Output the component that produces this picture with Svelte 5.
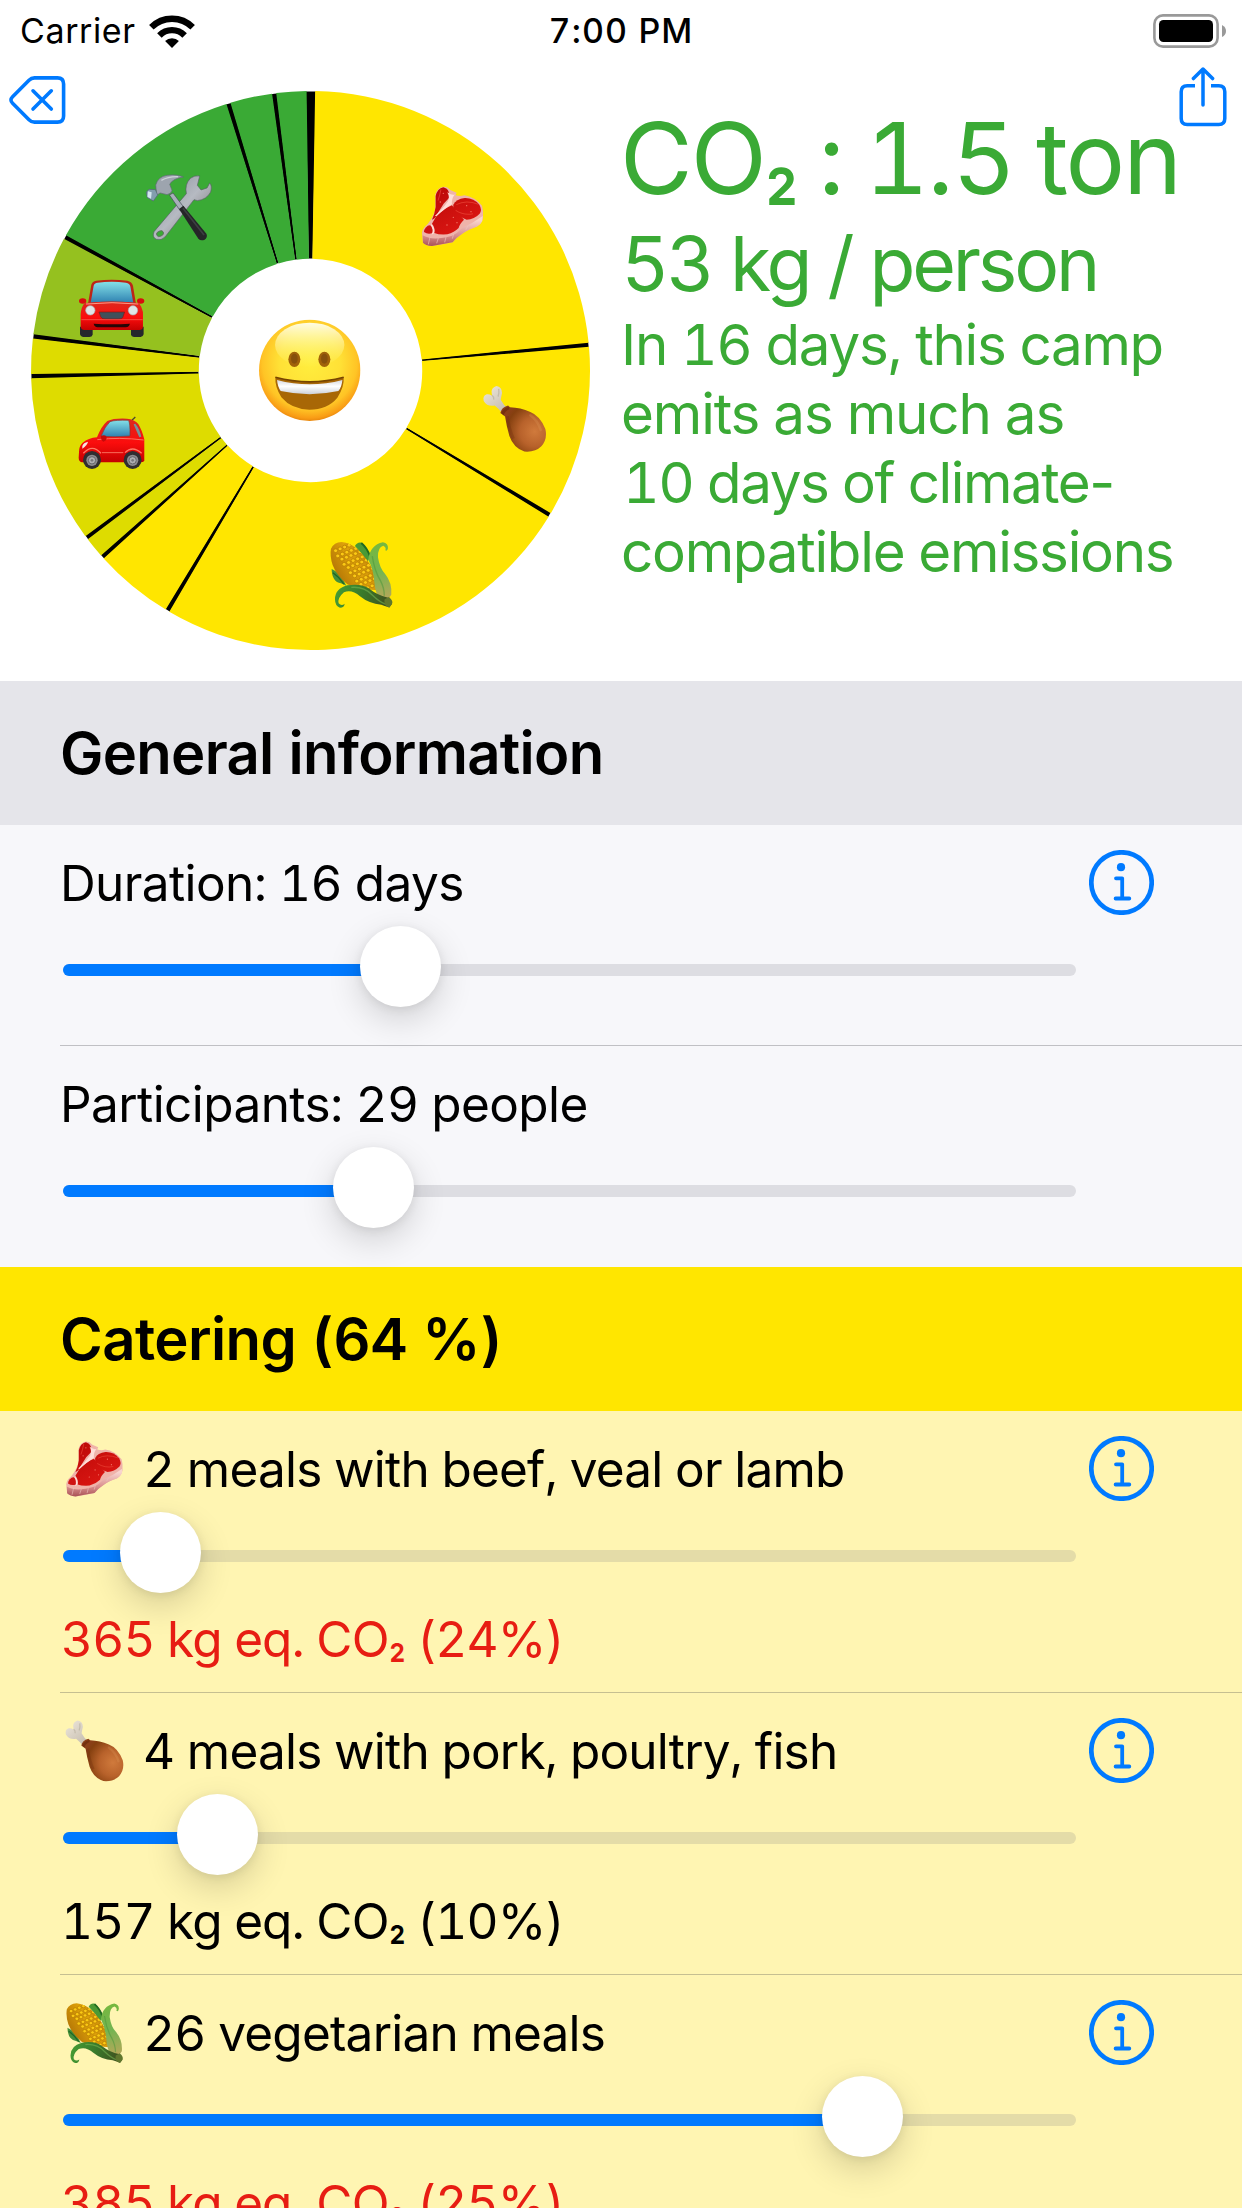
<script>
  const CX = 310.5;
  const CY = 370.5;
  const OUTER = 279.5;
  const INNER = 111.7;

  const YELLOW = '#ffe600';
  const LIME = '#dedc00';
  const OLIVE = '#95c11f';
  const GREEN = '#3aaa35';

  // Sector limits in degrees, clockwise from twelve o'clock.
  const sectors = [
    { from: 0.95, to: 84.3, color: YELLOW },
    { from: 85.15, to: 120.7, color: YELLOW },
    { from: 121.55, to: 210.35, color: YELLOW },
    { from: 211.2, to: 227.75, color: YELLOW },
    { from: 228.55, to: 232.85, color: LIME },
    { from: 233.65, to: 268.4, color: LIME },
    { from: 269.3, to: 276.6, color: LIME },
    { from: 277.45, to: 298.1, color: OLIVE },
    { from: 298.95, to: 342.5, color: GREEN },
    { from: 343.35, to: 352.1, color: GREEN },
    { from: 352.95, to: 359.2, color: GREEN },
  ];

  function point(radius, angle) {
    const rad = (angle * Math.PI) / 180;
    return `${(CX + radius * Math.sin(rad)).toFixed(2)} ${(CY - radius * Math.cos(rad)).toFixed(2)}`;
  }

  function ring(from, to, outer = OUTER, inner = INNER) {
    const large = to - from > 180 ? 1 : 0;
    return `M${point(outer, from)}A${outer} ${outer} 0 ${large} 1 ${point(outer, to)}L${point(inner, to)}A${inner} ${inner} 0 ${large} 0 ${point(inner, from)}Z`;
  }

  // Black wedges lie in the gaps between neighbouring sectors.
  const gaps = sectors.map((s, i) => {
    const next = sectors[(i + 1) % sectors.length];
    const end = i === sectors.length - 1 ? next.from + 360 : next.from;
    return ring(s.to - 0.15, end + 0.15, OUTER - 0.4, INNER + 0.4);
  });

  const general = [
    { label: 'Duration: 16 days', cls: 'duration', left: 297, info: true },
    { label: 'Participants: 29 people', cls: 'participants', left: 270, info: false },
  ];

  const meals = [
    { icon: 'steak', label: '2 meals with beef, veal or lamb', left: 57, kg: 365, share: 24, high: true },
    { icon: 'drumstick', label: '4 meals with pork, poultry, fish', left: 114, kg: 157, share: 10, high: false },
    { icon: 'corn', label: '26 vegetarian meals', left: 759, kg: 385, share: 25, high: true },
  ];

  const kernels = [];
  for (let r = 0; r < 10; r++) {
    for (let c = 0; c < 5; c++) {
      kernels.push({ x: 47 + c * 13.5 + r * 9.5 - (r % 2) * 3, y: 1112 - c * 5.5 + r * 12.6 + (r % 2) * 3 });
    }
  }
</script>

{#snippet steak()}
  <path d="M306 158 Q306 150 314 141 Q334 124 345 92 Q347 76 346 44 Q353 22 371 20 Q383 20 391 30 L410 38 L407 46 Q420 50 433 46 Q463 50 486 77 Q491 92 489 114 Q485 130 472 139 Q446 148 430 158 Q409 172 398 187 Q366 194 336 198 Q318 197 309 188 Z" fill="#efb3aa" />
  <path d="M308 166 Q338 184 396 167 Q412 160 427 143 Q459 130 488 108 L487 123 Q482 135 470 140 Q444 148 429 160 Q410 172 398 187 Q363 193 336 198 Q316 196 309 188 Z" fill="url(#steak-side)" />
  <path d="M330 171 L325 193 M355 174 L350 190 M378 171 L374 187 M401 162 L397 176 M444 138 L437 149" stroke="#edc1bd" stroke-width="3" fill="none" opacity=".65" />
  <path d="M347 81 L347 48 Q352 26 370 22 Q382 25 386 35 L389 52 L371 71 L354 98 Q346 117 336 119 Q344 102 347 81Z" fill="url(#steak-red)" />
  <path d="M349 109 Q374 84 396 76 Q411 95 432 119 Q418 133 416 144 Q403 157 382 163 Q358 165 343 159 Q346 143 336 131Z" fill="url(#steak-red)" />
  <path d="M400 74 Q408 57 434 54 Q461 53 478 74 Q487 89 479 101 Q463 118 440 119 Q414 110 400 91Z" fill="url(#steak-red)" />
  <path d="M317 143 Q326 133 334 137 Q343 148 338 159 Q324 165 312 156Q312 149 317 143Z" fill="#cf1413" />
  <path d="M409 74 Q437 59 475 73 M407 91 Q432 107 459 101 M363 28 Q359 48 354 62" stroke="#ed4a3a" stroke-width="3" fill="none" opacity=".65" />
  <path d="M345 107 Q365 91 384 64 Q390 51 382 37 Q398 48 405 43 Q394 56 396 73 Q375 85 349 109Z M335 133 Q346 145 342 160 L335 164 Q342 149 332 136Z" fill="#ffded8" />
  <g fill="#ff9c88" opacity=".75">
    <circle cx="361" cy="66" r="2" /><circle cx="370" cy="40" r="2" /><circle cx="400" cy="112" r="2" />
    <circle cx="381" cy="135" r="2" /><circle cx="440" cy="77" r="2" /><circle cx="453" cy="95" r="2" /><circle cx="411" cy="128" r="2" />
  </g>
{/snippet}

{#snippet drumstick()}
  <path d="M515 640 Q512 624 529 618 Q546 621 546 639 Q543 653 542 659 Q550 675 566 688 L550 704 Q536 686 524 677 Q501 681 491 663 Q487 648 500 643 Q508 642 516 647Z" fill="url(#bone)" />
  <path d="M516 646 Q522 650 521 659 M536 627 Q538 641 534 650" stroke="#b9b0a0" stroke-width="4" fill="none" opacity=".7" />
  <path d="M541 699 Q544 683 564 677 L570 682 Q601 683 631 696 Q660 707 676 747 Q683 778 664 799 Q645 818 613 815 Q580 803 568 768 Q559 737 555 710Z" fill="url(#chicken)" />
  <path d="M544 699 Q549 685 566 681 L568 688 Q554 694 551 706Z" fill="#74300f" />
  <path d="M562 709 Q566 746 580 776" stroke="#6b2b10" stroke-width="9" fill="none" opacity=".28" />
  <path d="M631 706 Q654 723 662 750" stroke="#efb06e" stroke-width="8" fill="none" opacity=".18" stroke-linecap="round" />
{/snippet}

{#snippet corn()}
  <path d="M35 1167 Q61 1177 79 1217 L63 1210 Q36 1206 35 1167Z" fill="#458f39" />
  <path d="M39 1178 Q58 1191 72 1212" stroke="#1f6527" stroke-width="4" fill="none" />
  <path d="M105 1098 Q112 1084 126 1088 Q144 1104 151 1133 L141 1145 Q127 1119 105 1098Z" fill="#4b9a35" />
  <path d="M124 1089 Q142 1104 151 1131" stroke="#216a22" stroke-width="6" fill="none" />
  <path d="M33 1106 Q42 1087 65 1086 Q91 1089 111 1106 Q140 1133 154 1162 Q174 1190 182 1222 L173 1231 Q109 1228 82 1213 Q50 1187 38 1155 Q29 1127 33 1106Z" fill="url(#cob)" />
  <g clip-path="url(#cob-clip)">
    {#each kernels as k}
      <ellipse cx={k.x} cy={k.y} rx="6.2" ry="5.6" fill="#fbc914" stroke="#b57c05" stroke-width="2.2" />
    {/each}
  </g>
  <path d="M145 1139 Q150 1095 189 1087 Q205 1090 204 1105 Q202 1115 196 1111 Q200 1102 190 1097 Q173 1101 174 1132 Q179 1165 195 1181 Q217 1208 214 1244 Q201 1266 181 1258 Q165 1239 163 1205 Q160 1166 145 1139Z" fill="url(#leaf)" />
  <path d="M157 1128 Q163 1171 181 1201 Q193 1223 193 1247" stroke="#4c963d" stroke-width="4" fill="none" opacity=".55" />
  <path d="M82 1216 Q122 1209 146 1225 Q173 1247 207 1254 L216 1272 L208 1282 Q192 1277 184 1274 Q147 1271 120 1249 Q95 1227 72 1237 Q52 1254 56 1270 Q65 1279 74 1271 Q73 1283 60 1283 Q45 1278 45 1258 Q45 1226 82 1216Z" fill="url(#leaf-low)" />
  <path d="M94 1222 Q132 1219 156 1244 Q177 1265 198 1273" stroke="#78b955" stroke-width="4" fill="none" opacity=".55" />
  <path d="M194 1258 L207 1251 Q221 1263 216 1272 L208 1283 L199 1279 Q191 1271 194 1258Z" fill="#60772d" />
{/snippet}

{#snippet infoIcon()}
  <svg class="info" viewBox="0 0 65 65">
    <g fill="none" stroke="#007aff" stroke-linecap="round" stroke-linejoin="round">
      <circle cx="32.5" cy="32.5" r="30.2" stroke-width="4.7" />
      <path d="M27 28.3H33.2V48.2M26.6 48.5H40.3" stroke-width="3.8" />
    </g>
    <circle cx="32" cy="17.2" r="4.1" fill="#007aff" />
  </svg>
{/snippet}

{#snippet slider(left)}
  <div class="slider">
    <div class="track"><div class="fill" style:width="{left + 40}px"></div></div>
    <div class="thumb" style:left="{left}px"></div>
  </div>
{/snippet}

<div class="screen">
  <header class="status">
    <div class="carrier">
      <span>Carrier</span>
      <svg class="wifi" viewBox="-23 -33 46 33">
        <path d="M-20.65 -20.65A29.2 29.2 0 0 1 20.65 -20.65M-12.6 -12.6A17.8 17.8 0 0 1 12.6 -12.6" fill="none" stroke="#000" stroke-width="6.4" />
        <path d="M0 0L-6.9 -7A10 10 0 0 1 6.9 -7Z" />
      </svg>
    </div>
    <div class="clock">7:00 PM</div>
    <svg class="battery" viewBox="0 0 74 34">
      <rect x="1.4" y="1.4" width="63.2" height="31.2" rx="8.6" fill="none" stroke="#999" stroke-width="2.6" />
      <rect x="6" y="6" width="54" height="22" rx="4.5" />
      <path d="M69 11Q73 13 73 17T69 23Z" fill="#999" />
    </svg>
  </header>

  <svg class="back" viewBox="0 0 57 48" fill="none" stroke="#007aff" stroke-width="3.6" stroke-linecap="round" stroke-linejoin="round">
    <path d="M25.5 1.9H48.5Q54.6 1.9 54.6 8V40Q54.6 46.1 48.5 46.1H25.5Q22.3 46.1 20 43.7L3.6 27.3Q.3 24 3.6 20.7L20 4.3Q22.3 1.9 25.5 1.9Z" />
    <path d="M24 14.8L42.3 33.1M42.3 14.8L24 33.1" />
  </svg>
  <svg class="share" viewBox="0 0 48 60" fill="none" stroke="#007aff" stroke-width="3.5" stroke-linecap="round" stroke-linejoin="round">
    <path d="M24 38V2.5M14.4 11.6L24 2L33.6 11.6" />
    <path d="M16 18.8H8.2Q2.2 18.8 2.2 24.8V51.6Q2.2 57.6 8.2 57.6H39.8Q45.8 57.6 45.8 51.6V24.8Q45.8 18.8 39.8 18.8H32" stroke-linecap="butt" />
  </svg>

  <section class="hero">
    <svg class="chart" viewBox="30 90 561 561">
      <defs>
        <clipPath id="cob-clip"><path d="M33 1106 Q42 1087 65 1086 Q91 1089 111 1106 Q140 1133 154 1162 Q174 1190 182 1222 L173 1231 Q109 1228 82 1213 Q50 1187 38 1155 Q29 1127 33 1106Z" /></clipPath>
        <linearGradient id="steak-side" gradientUnits="userSpaceOnUse" x1="0" y1="120" x2="0" y2="198"><stop offset="0" stop-color="#f8d5cf" /><stop offset=".6" stop-color="#d98e8d" /><stop offset="1" stop-color="#a95356" /></linearGradient>
        <linearGradient id="steak-red" gradientUnits="userSpaceOnUse" x1="350" y1="30" x2="430" y2="160"><stop offset="0" stop-color="#bd0a08" /><stop offset="1" stop-color="#dc1713" /></linearGradient>
        <linearGradient id="bone" gradientUnits="userSpaceOnUse" x1="500" y1="630" x2="550" y2="690"><stop offset="0" stop-color="#e8e1d5" /><stop offset="1" stop-color="#c8bfb1" /></linearGradient>
        <radialGradient id="chicken" gradientUnits="userSpaceOnUse" cx="644" cy="755" r="98"><stop offset="0" stop-color="#d07a3c" /><stop offset=".45" stop-color="#b8622b" /><stop offset=".85" stop-color="#85400f" /><stop offset="1" stop-color="#8b3f18" /></radialGradient>
        <linearGradient id="cob" gradientUnits="userSpaceOnUse" x1="50" y1="1180" x2="140" y2="1130"><stop offset="0" stop-color="#b87a06" /><stop offset=".6" stop-color="#dda00a" /><stop offset="1" stop-color="#c98d0b" /></linearGradient>
        <linearGradient id="leaf" gradientUnits="userSpaceOnUse" x1="170" y1="1090" x2="195" y2="1255"><stop offset="0" stop-color="#76b83f" /><stop offset=".5" stop-color="#73b451" /><stop offset="1" stop-color="#b5a859" /></linearGradient>
        <linearGradient id="leaf-low" gradientUnits="userSpaceOnUse" x1="50" y1="1225" x2="205" y2="1265"><stop offset="0" stop-color="#459b33" /><stop offset=".5" stop-color="#39792b" /><stop offset="1" stop-color="#40501f" /></linearGradient>
        <linearGradient id="glass" x1="0" y1="0" x2="0" y2="1"><stop offset="0" stop-color="#84e0e8" /><stop offset="1" stop-color="#2f82b1" /></linearGradient>
        <linearGradient id="car-red" x1="0" y1="0" x2="0" y2="1"><stop offset="0" stop-color="#dc2a1f" /><stop offset=".55" stop-color="#fb0d0d" /><stop offset="1" stop-color="#c40000" /></linearGradient>
        <linearGradient id="steel" x1="0" y1="0" x2="1" y2="1"><stop offset="0" stop-color="#7f8791" /><stop offset=".5" stop-color="#b6bac2" /><stop offset="1" stop-color="#6f6667" /></linearGradient>
        <radialGradient id="face" cx=".5" cy=".42" r=".6"><stop offset="0" stop-color="#ffee3e" /><stop offset=".5" stop-color="#ffe136" /><stop offset=".78" stop-color="#ffc425" /><stop offset=".92" stop-color="#f99c15" /><stop offset="1" stop-color="#dd7908" /></radialGradient>
        <linearGradient id="shine" x1="0" y1="0" x2="0" y2="1"><stop offset="0" stop-color="#fffff0" stop-opacity=".95" /><stop offset="1" stop-color="#ffff80" stop-opacity="0" /></linearGradient>
        <linearGradient id="teeth" x1="0" y1="0" x2="0" y2="1"><stop offset="0" stop-color="#d6d8de" /><stop offset=".45" stop-color="#fff" /><stop offset="1" stop-color="#ccd0d8" /></linearGradient>
      </defs>

      {#each gaps as d}<path {d} fill="#000" />{/each}
      {#each sectors as s}<path d={ring(s.from, s.to)} fill={s.color} />{/each}

      <svg x="421.3" y="186" width="62.7" height="60.7" viewBox="304 18 188 182">{@render steak()}</svg>
      <svg x="482.7" y="385.3" width="64" height="67.3" viewBox="488 616 192 202">{@render drumstick()}</svg>
      <svg x="329.3" y="540.7" width="64" height="68" viewBox="28 1082 192 204">{@render corn()}</svg>

      <!-- oncoming car -->
      <svg x="78" y="278.7" width="67.3" height="59.3" viewBox="54 26 202 178">
        <path d="M60 170H98V194Q96 201 88 201H69Q61 200 60 193ZM213 170H251V193Q249 201 242 201H222Q214 200 213 194Z" fill="#25272c" />
        <path d="M84 101L94 44Q97 34 109 32Q155 26 202 32Q216 35 219 47L228 101Z" fill="#bd2418" />
        <path d="M92 98L101 47Q103 39 113 38Q155 32 198 38Q209 40 211 49L220 98Q156 91 92 98Z" fill="url(#glass)" />
        <ellipse cx="68" cy="93" rx="11" ry="8" fill="#d90d0d" /><ellipse cx="242" cy="93" rx="11" ry="8" fill="#d90d0d" />
        <path d="M74 99Q156 91 237 99Q246 111 249 126V171Q248 180 238 180H73Q63 179 62 170V132Q64 110 74 99Z" fill="url(#car-red)" />
        <path d="M78 102Q156 94 235 102" stroke="#ff9a88" stroke-width="3" fill="none" />
        <circle cx="91" cy="121" r="14" fill="#dfe4e6" stroke="#aab2b3" stroke-width="2" /><circle cx="219" cy="121" r="14" fill="#dfe4e6" stroke="#aab2b3" stroke-width="2" />
        <path d="M117 126H194L188 143Q184 147 177 147H135Q125 147 122 140Z" fill="#41505a" stroke="#8a1711" stroke-width="2" />
        <path d="M64 149H248" stroke="#ff7568" stroke-width="3" opacity=".6" />
        <path d="M101 161Q155 165 210 161L207 168Q203 172 196 172H113Q103 171 101 161Z" fill="#260607" />
      </svg>

      <!-- small hatchback -->
      <svg x="77.3" y="416" width="68.7" height="53.3" viewBox="52 438 206 160">
        <path d="M216 451L226 441" stroke="#4c4930" stroke-width="4" />
        <path d="M57 546Q56 530 68 518Q85 504 111 502Q123 470 142 453Q162 444 201 446Q224 448 235 462Q246 480 253 508V573Q249 577 242 577H65Q56 574 56 563Z" fill="url(#car-red)" />
        <path d="M123 499Q134 470 150 455Q168 449 205 451Q211 456 210 498Q165 502 123 499Z" fill="url(#glass)" stroke="#863530" stroke-width="2" />
        <path d="M226 461Q239 477 244 500L238 502Q229 482 221 463Z" fill="#74949a" />
        <path d="M67 528Q70 518 84 515Q82 526 67 536Z" fill="#f6e6e3" />
        <path d="M112 509Q177 501 251 510M126 548H190" stroke="#ff8e78" stroke-width="3" fill="none" opacity=".75" />
        <path d="M70 550Q97 520 123 550M195 548Q218 525 245 550" stroke="#ff7665" stroke-width="4" fill="none" />
        <path d="M123 498Q137 492 140 502Q140 513 130 515Q122 510 123 498Z" fill="#c50a0a" />
        {#each [96, 218] as x}
          <circle cx={x} cy="570" r="27" fill="#302e31" /><circle cx={x} cy="571" r="17" fill="#8d8c90" /><circle cx={x} cy="571" r="11" fill="#aeafb3" stroke="#66666b" stroke-width="3" /><circle cx={x} cy="571" r="4" fill="#77777c" />
        {/each}
      </svg>

      <!-- hammer and wrench -->
      <svg x="144.7" y="173.3" width="68" height="68" viewBox="44 40 204 204">
        <path d="M169 101Q163 74 181 55Q193 45 209 48L202 76L213 90L231 84L239 69Q247 78 242 96Q230 119 202 122L192 119L105 231Q94 243 79 238Q65 231 72 215Z" fill="url(#steel)" stroke="#596067" stroke-width="2" />
        <ellipse cx="90" cy="221" rx="11" ry="8" transform="rotate(-25 90 221)" fill="#3aaa35" stroke="#656166" stroke-width="2" />
        <path d="M118 105L129 99L162 143L151 153Z" fill="#a8afb8" stroke="#434a54" stroke-width="2" />
        <path d="M147 147L160 137L229 221Q234 231 224 239Q212 244 205 236Z" fill="#252628" />
        <path d="M159 145L222 225" stroke="#54575b" stroke-width="5" opacity=".5" />
        <path d="M77 75Q84 50 111 46Q142 42 160 51Q129 55 119 73L126 91Q124 102 111 104L90 99L80 106Z" fill="#9da4ae" stroke="#606975" stroke-width="2" />
        <path d="M94 61Q115 49 144 50" stroke="#cdd2d8" stroke-width="4" fill="none" />
        <path d="M57 88L76 89L83 105L70 123L52 113L49 96Z" fill="#829eae" stroke="#526474" stroke-width="2" />
        <path d="M54 94L65 97L63 116L52 110Z" fill="#d3e7ef" />
      </svg>

      <!-- grinning face -->
      <svg x="258.7" y="319.3" width="102" height="102" viewBox="596 148 306 306">
        <circle cx="749" cy="301" r="152" fill="url(#face)" />
        <ellipse cx="749" cy="225" rx="104" ry="67" fill="url(#shine)" />
        <ellipse cx="703" cy="268" rx="18" ry="23" fill="#a0620a" /><ellipse cx="793" cy="268" rx="18" ry="23" fill="#a0620a" />
        <ellipse cx="703" cy="266" rx="10" ry="15" fill="#86510c" /><ellipse cx="793" cy="266" rx="10" ry="15" fill="#86510c" />
        <path d="M646 322Q749 349 851 322Q853 352 832 383Q802 419 748 419Q694 418 664 382Q644 350 646 322Z" fill="#a86706" />
        <path d="M646 322Q749 349 851 322" fill="none" stroke="#764400" stroke-width="5" />
        <path d="M651 330Q749 356 847 330Q845 352 835 363Q749 382 662 363Q653 351 651 330Z" fill="url(#teeth)" />
      </svg>
    </svg>

    <div class="summary">
      <h1>CO<span class="sub">₂</span> : 1.5 ton</h1>
      <h2>53 kg / person</h2>
      <p>
        <span class="l1">In 16 days, this camp</span>
        <span class="l2">emits as much as</span>
        <span class="l3">10 days of <i>climate-</i></span>
        <span class="l4">compatible emissions</span>
      </p>
    </div>
  </section>

  <h3 class="heading general-heading">General information</h3>
  <section class="rows general">
    {#each general as row}
      <div class="row">
        <div class="main">
          <div class="label"><span class={row.cls}>{row.label}</span></div>
          {@render slider(row.left)}
        </div>
        {#if row.info}{@render infoIcon()}{/if}
      </div>
    {/each}
  </section>

  <h3 class="heading catering-heading">Catering (64 %)</h3>
  <section class="rows catering">
    {#each meals as row}
      <div class="row">
        <div class="main">
          <div class="label">
            {#if row.icon === 'steak'}
              <svg class="food steak" viewBox="304 18 188 182">{@render steak()}</svg>
            {:else if row.icon === 'drumstick'}
              <svg class="food drumstick" viewBox="488 616 192 202">{@render drumstick()}</svg>
            {:else}
              <svg class="food corn" viewBox="28 1082 192 204">{@render corn()}</svg>
            {/if}
            <span class="meal">{row.label}</span>
          </div>
          {@render slider(row.left)}
          <div class="result" class:high={row.high}>{row.kg} kg eq. CO<span class="sub">₂</span> ({row.share}%)</div>
        </div>
        {@render infoIcon()}
      </div>
    {/each}
  </section>
</div>

<style>
  :global(body) { margin: 0; background: #fff; }
  .screen {
    position: relative;
    width: 1242px;
    height: 2208px;
    overflow: hidden;
    font-family: Inter, 'Liberation Sans', sans-serif;
    font-variant-numeric: tabular-nums;
    color: #000;
    display: flex;
    flex-direction: column;
  }
  .screen > * { flex-shrink: 0; }
  svg { display: block; flex-shrink: 0; }

  .status {
    display: grid;
    grid-template-columns: 1fr auto 1fr;
    align-items: center;
    height: 60px;
    padding: 0 15px;
    box-sizing: border-box;
    font-size: 34px;
    line-height: 62px;
  }
  .carrier { display: flex; align-items: center; gap: 13px; margin-left: 5px; letter-spacing: .6px; }
  .clock { font-weight: 500; letter-spacing: 1.1px; }
  .wifi { width: 46px; height: 33px; }
  .battery { width: 74px; height: 34px; justify-self: end; }

  .back { position: absolute; left: 9px; top: 76px; width: 57px; height: 48px; }
  .share { position: absolute; left: 1179px; top: 67px; width: 48px; height: 60px; }

  .hero { display: flex; height: 621px; padding: 30px 0 0 30px; box-sizing: border-box; }
  .chart { width: 561px; height: 561px; }
  .summary { margin: 8px 0 0 30px; color: #3aaa35; white-space: nowrap; }
  h1, h2, h3, p { margin: 0; font-weight: 400; }
  h1 { font-size: 99.5px; line-height: 120px; letter-spacing: -2px; word-spacing: -3px; margin-left: -1px; }
  h2 { font-size: 75px; line-height: 92px; letter-spacing: -3.2px; word-spacing: 1.3px; }
  p { font-size: 56.5px; line-height: 69px; }
  p span { display: block; }
  i { font-style: normal; font-variant-numeric: normal; }
  .l1 { letter-spacing: -1.28px; }
  .l2 { letter-spacing: -1.12px; }
  .l3 { letter-spacing: -1.45px; padding-left: 2px; }
  .l4 { letter-spacing: -1.26px; }
  .sub {
    display: inline-block;
    font-weight: 500;
    transform: translateY(-.03em) scale(.75, .93);
    transform-origin: left 75%;
    margin-right: -.11em;
  }

  .heading {
    height: 144px;
    padding-left: 60px;
    font-size: 58px;
    line-height: 144px;
    font-weight: 600;
  }
  .general-heading { background: #e5e5ea; letter-spacing: -.7px; }
  .catering-heading { background: #ffe600; letter-spacing: -.57px; }
  .general { background: #f7f7fa; }
  .catering { background: #fff5b2; }

  .row {
    display: flex;
    height: 220px;
    margin-left: 60px;
    padding-left: 3px;
    border-bottom: 1px solid rgba(60, 60, 67, .29);
  }
  .general .row:last-child { border-color: transparent; }
  .catering .row { height: 281px; }
  .main { width: 1013px; white-space: nowrap; }
  .label {
    display: flex;
    align-items: center;
    height: 60px;
    padding: 28px 0 13px;
    font-size: 49.5px;
    line-height: 60px;
  }
  .duration { margin-left: -3px; letter-spacing: -.6px; }
  .participants { margin-left: -3px; letter-spacing: -.58px; }
  .meal { letter-spacing: -.78px; }
  .info { width: 65px; height: 65px; margin: 25px 0 0 13px; }
  .food { margin-left: 2px; margin-right: 19px; width: 59px; }
  .steak { height: 56px; }
  .drumstick, .corn { height: 62px; }

  .slider { position: relative; height: 81px; display: flex; align-items: center; }
  .track { width: 1013px; height: 12px; margin-top: 7px; border-radius: 6px; background: rgba(120, 120, 128, .2); overflow: hidden; }
  .fill { height: 12px; background: #007aff; }
  .thumb {
    position: absolute;
    top: 0;
    width: 81px;
    height: 81px;
    border-radius: 50%;
    background: #fff;
    box-shadow: 0 12px 34px rgba(0, 0, 0, .16), 0 2px 10px rgba(0, 0, 0, .08);
  }
  .result { position: relative; margin: 16px 0 0 -2px; font-size: 49.5px; line-height: 60px; letter-spacing: -.88px; }
  .high { color: #e71d13; }
</style>
